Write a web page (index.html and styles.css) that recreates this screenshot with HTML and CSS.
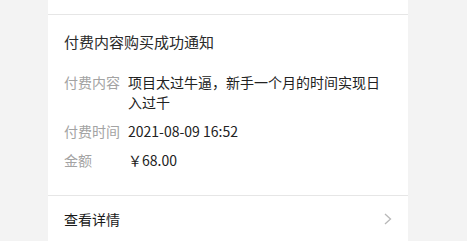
FILE: index.html
```html
<!DOCTYPE html>
<html lang="zh-CN">
<head>
<meta charset="utf-8">
<link rel="stylesheet" href="styles.css">
</head>
<body>
<div class="card">
  <div class="card-top"></div>
  <div class="card-body">
    <div class="title">付费内容购买成功通知</div>
    <div class="rows">
      <div class="row"><span class="label">付费内容</span><span class="value">项目太过牛逼，新手一个月的时间实现日入过千</span></div>
      <div class="row"><span class="label">付费时间</span><span class="value">2021-08-09 16:52</span></div>
      <div class="row row-amount"><span class="label">金额</span><span class="value">￥68.00</span></div>
    </div>
  </div>
  <div class="card-footer">
    <span class="more">查看详情</span>
    <svg class="chevron" width="8" height="12" viewBox="0 0 8 12"><path d="M1 1 L6.5 6 L1 11" fill="none" stroke="#b8b8b8" stroke-width="1.3"/></svg>
  </div>
</div>
</body>
</html>
```
FILE: styles.css
```css
html, body {
  margin: 0;
  padding: 0;
  background: #f3f3f3;
  height: 100%;
  overflow: hidden;
}
body {
  font-family: "Noto Sans CJK SC", "Noto Sans", sans-serif;
  color: #333;
}
.card {
  width: 360px;
  margin-left: 48px;
  background: #fff;
  min-height: 100%;
}
.card-top {
  height: 14px;
  border-bottom: 1px solid #e6e6e6;
}
.card-body {
  padding: 16px 16px 25px 16px;
  border-bottom: 1px solid #e6e6e6;
}
.title {
  font-size: 15px;
  line-height: 22px;
  color: #2a2a2a;
}
.rows {
  margin-top: 19px;
  display: flex;
  flex-direction: column;
  gap: 9px;
}
.row {
  display: flex;
  font-size: 14px;
  line-height: 20px;
}
.label {
  flex: 0 0 64px;
  color: #a3a3a3;
}
.value {
  flex: 1;
  color: #222;
}
.card-footer {
  display: flex;
  align-items: center;
  justify-content: space-between;
  padding: 13px 16px 13px 16px;
}
.more {
  font-size: 14px;
  line-height: 20px;
  color: #1a1a1a;
}
.chevron {
  display: block;
}
```
